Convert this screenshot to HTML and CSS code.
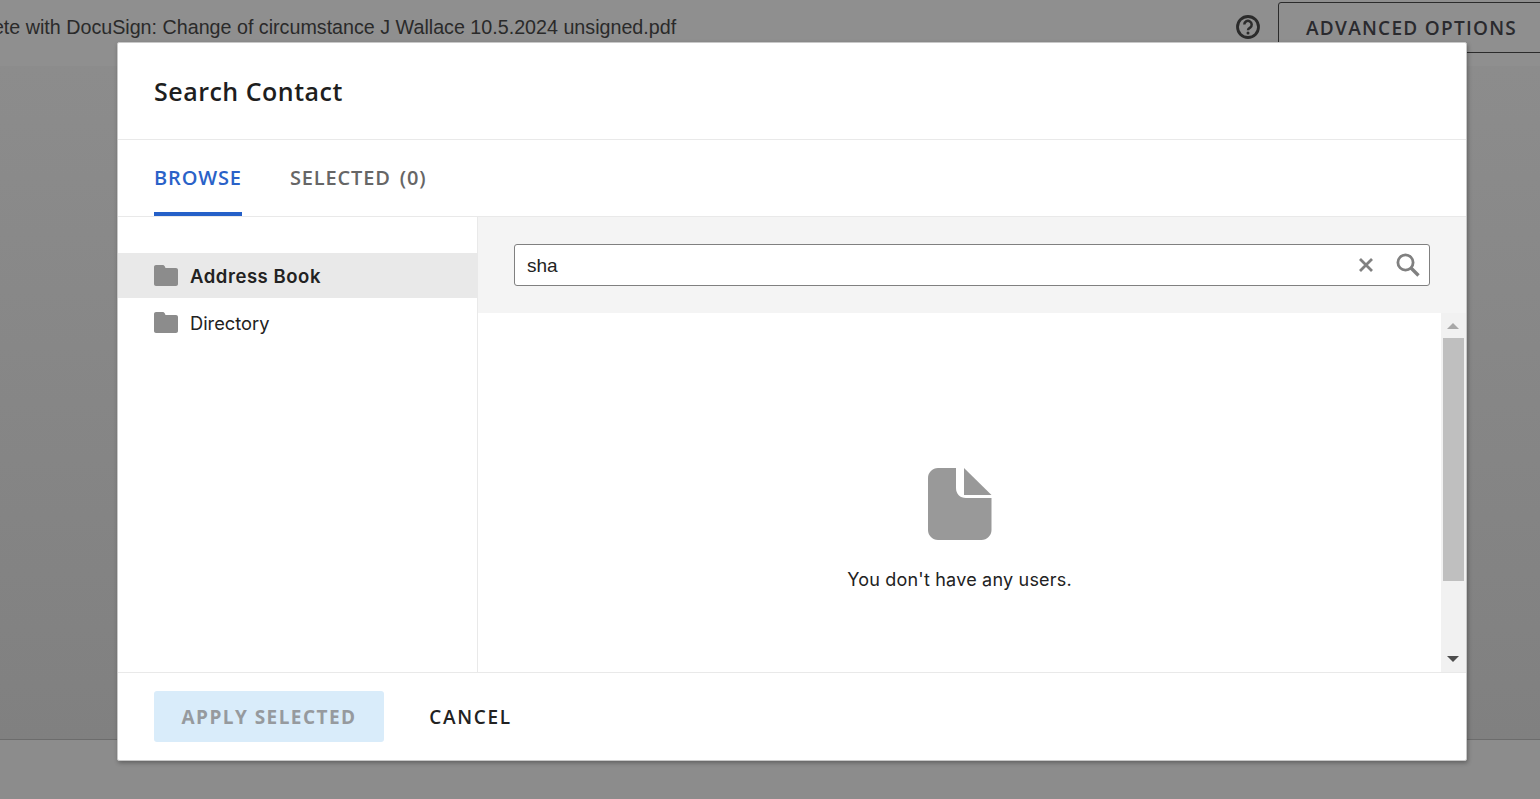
FILE: index.html
```html
<!DOCTYPE html>
<html lang="en">
<head>
<meta charset="utf-8">
<title>Search Contact</title>
<link rel="stylesheet" href="styles.css">
</head>
<body>
<div class="page">
  <header class="topbar">
    <div class="doc-title">Complete with DocuSign: Change of circumstance J Wallace 10.5.2024 unsigned.pdf</div>
    <svg class="help" width="24" height="24" viewBox="0 0 24 24"><circle cx="12" cy="12" r="10.500" fill="none" stroke="#2b2b2b" stroke-width="2.800"/><path d="M8.300 9.600a3.700 3.700 0 1 1 5.800 3c-1.300.8-2.100 1.300-2.100 2.600" fill="none" stroke="#2b2b2b" stroke-width="2.500"/><circle cx="12" cy="18" r="1.500" fill="#2b2b2b"/></svg>
    <div class="advanced">ADVANCED OPTIONS</div>
  </header>
  <main class="backdrop-main"></main>
  <footer class="bottombar"></footer>
</div>

<section class="modal">
  <h1 class="modal-title">Search Contact</h1>
  <nav class="tabs">
    <div class="tab tab-active">BROWSE</div>
    <div class="tab">SELECTED (0)</div>
  </nav>
  <div class="modal-body">
    <aside class="sidebar">
      <div class="folder folder-active">
        <svg class="folder-icon" width="24" height="21" viewBox="0 0 24 21"><path d="M2 0h6.500c1 0 1.600.5 2.200 1.300l.8 1.700H22c1.100 0 2 .9 2 2V19c0 1.100-.9 2-2 2H2c-1.100 0-2-.9-2-2V2C0 .9.900 0 2 0z" fill="#8c8c8c"/></svg>
        <span>Address Book</span>
      </div>
      <div class="folder">
        <svg class="folder-icon" width="24" height="21" viewBox="0 0 24 21"><path d="M2 0h6.500c1 0 1.600.5 2.200 1.300l.8 1.700H22c1.100 0 2 .9 2 2V19c0 1.100-.9 2-2 2H2c-1.100 0-2-.9-2-2V2C0 .9.900 0 2 0z" fill="#8c8c8c"/></svg>
        <span>Directory</span>
      </div>
    </aside>
    <div class="content">
      <div class="search-panel">
        <div class="search-box">
          <span class="search-text">sha</span>
          <svg class="clear-icon" width="16" height="16" viewBox="0 0 16 16"><path d="M2 2l12 12M14 2L2 14" stroke="#808080" stroke-width="2.800" fill="none"/></svg>
          <svg class="search-icon" width="24" height="24" viewBox="0 0 24 24"><circle cx="9.500" cy="9.500" r="7.600" fill="none" stroke="#808080" stroke-width="2.800"/><path d="M15 15l7.500 7.500" stroke="#808080" stroke-width="3.400" fill="none"/></svg>
        </div>
      </div>
      <div class="results">
        <div class="empty">
          <svg class="empty-icon" width="64" height="72" viewBox="0 0 64 72"><path d="M10 0h18v20c0 6 4 10 10 10h25.500v32c0 5.500-4.500 10-10 10H10C4.500 72 0 67.500 0 62V10C0 4.500 4.500 0 10 0z" fill="#999"/><path d="M36 0l27.500 27H36z" fill="#999"/></svg>
          <p class="empty-text">You don't have any users.</p>
        </div>
        <div class="scrollbar">
          <span class="arrow arrow-up"></span>
          <div class="track"><div class="thumb"></div></div>
          <span class="arrow arrow-down"></span>
        </div>
      </div>
    </div>
  </div>
  <div class="modal-footer">
    <button class="btn btn-apply" type="button">APPLY SELECTED</button>
    <button class="btn btn-cancel" type="button">CANCEL</button>
  </div>
</section>
</body>
</html>
```
FILE: styles.css
```css
* { box-sizing: border-box; }
html, body { margin: 0; height: 100%; overflow: hidden; }
body { background: #8c8c8c; font-family: "Liberation Sans", Arial, sans-serif; color: #222; }

.page { height: 799px; display: flex; flex-direction: column; }
.topbar {
  height: 66px;
  background: #8f8f8f;
  display: flex;
  align-items: flex-start;
  overflow: hidden;
  position: relative;
}
.doc-title {
  margin-left: -64px;
  margin-top: 16px;
  font-size: 19.700px;
  line-height: 23px;
  color: #2a2a2a;
  white-space: nowrap;
  flex: none;
}
.help { position: absolute; left: 1236px; top: 15px; }
.advanced {
  position: absolute;
  left: 1278px;
  top: 2px;
  width: 270px;
  height: 51px;
  border: 1px solid #2b2b2b;
  border-radius: 3px 0 0 0;
  padding: 13px 0 0 27px;
  font-family: "Open Sans", sans-serif;
  font-weight: 600;
  font-size: 19px;
  line-height: 24px;
  letter-spacing: 1.270px;
  color: #2a2a2e;
  white-space: nowrap;
}
.backdrop-main { flex: 1; background: linear-gradient(#8c8c8c, #808080); }
.bottombar { height: 60px; background: #8c8c8c; border-top: 1px solid #6c6c6c; }

.modal {
  position: absolute;
  left: 117px;
  top: 42px;
  width: 1350px;
  height: 719px;
  background: #fff;
  border: 1px solid #c8c8c8;
  border-radius: 2px;
  box-shadow: 1px 2px 4px rgba(0,0,0,.3);
  display: flex;
  flex-direction: column;
}
.modal-title {
  margin: 0;
  height: 97px;
  flex: none;
  padding: 31px 0 0 36px;
  font-family: "Open Sans", sans-serif;
  font-weight: 600;
  font-size: 25px;
  line-height: 34px;
  letter-spacing: .5px;
  color: #1e1e1e;
  border-bottom: 1px solid #e9e9e9;
}
.tabs {
  height: 77px;
  flex: none;
  display: flex;
  gap: 48px;
  padding-left: 36px;
  border-bottom: 1px solid #e9e9e9;
}
.tab {
  height: 76px;
  padding-top: 24px;
  font-family: "Open Sans", sans-serif;
  font-weight: 600;
  font-size: 20px;
  line-height: 28px;
  color: #666;
  letter-spacing: .85px;
  word-spacing: 3px;
}
.tab-active { color: #2a62c8; border-bottom: 4px solid #2560c8; }

.modal-body { flex: 1; display: flex; min-height: 0; }
.sidebar { width: 360px; flex: none; padding-top: 36px; border-right: 1px solid #e9e9e9; }
.folder {
  height: 45px;
  margin-bottom: 2px;
  display: flex;
  align-items: center;
  gap: 12px;
  padding-left: 36px;
  font-family: Inter, sans-serif;
  font-size: 18.300px;
  color: #222;
}
.folder-icon { margin-top: -1px; }
.folder-active { background: #e9e9e9; font-weight: 600; font-size: 18.500px; letter-spacing: .55px; }
.content { flex: 1; display: flex; flex-direction: column; min-width: 0; }
.search-panel { height: 96px; flex: none; background: #f4f4f4; padding: 27px 36px 0; }
.search-box {
  height: 42px;
  border: 1px solid #808080;
  border-radius: 3px;
  background: #fff;
  display: flex;
  align-items: center;
  padding: 0 9px 0 12px;
}
.search-text { flex: 1; padding-top: 1px; font-family: "Liberation Sans", sans-serif; font-size: 19px; color: #222; }
.clear-icon { margin-right: 22px; }
.results { flex: 1; display: flex; min-height: 0; }
.empty {
  flex: 1;
  display: flex;
  flex-direction: column;
  align-items: center;
  padding-top: 155px;
}
.empty-icon { display: block; }
.empty-text {
  margin: 28px 0 0;
  font-family: Inter, sans-serif;
  font-size: 18px;
  line-height: 24px;
  letter-spacing: .2px;
  color: #222;
}
.scrollbar {
  width: 25px;
  flex: none;
  background: #f1f1f1;
  display: flex;
  flex-direction: column;
  align-items: center;
  position: relative;
}
.track { position: absolute; left: 2px; right: 2px; top: 25px; height: 243px; }
.thumb { height: 100%; background: #bfbfbf; }
.arrow { position: absolute; left: 6px; width: 0; height: 0; border-left: 6px solid transparent; border-right: 6px solid transparent; }
.arrow-up { top: 10px; border-bottom: 6px solid #a8a8a8; }
.arrow-down { top: 343px; border-top: 6px solid #4d4d4d; }

.modal-footer {
  height: 88px;
  flex: none;
  border-top: 1px solid #e9e9e9;
  display: flex;
  align-items: flex-start;
  gap: 31px;
  padding: 18px 0 0 36px;
}
.btn {
  height: 51px;
  border: 0;
  border-radius: 3px;
  font-family: "Open Sans", sans-serif;
  font-weight: 700;
  font-size: 19px;
  letter-spacing: 1.450px;
  padding: 0;
  cursor: pointer;
}
.btn-apply { width: 230px; background: #d9ecfa; color: #969a9e; }
.btn-cancel { width: 110px; background: none; color: #222; font-weight: 600; letter-spacing: 1.700px; padding-left: 1px; }
```
